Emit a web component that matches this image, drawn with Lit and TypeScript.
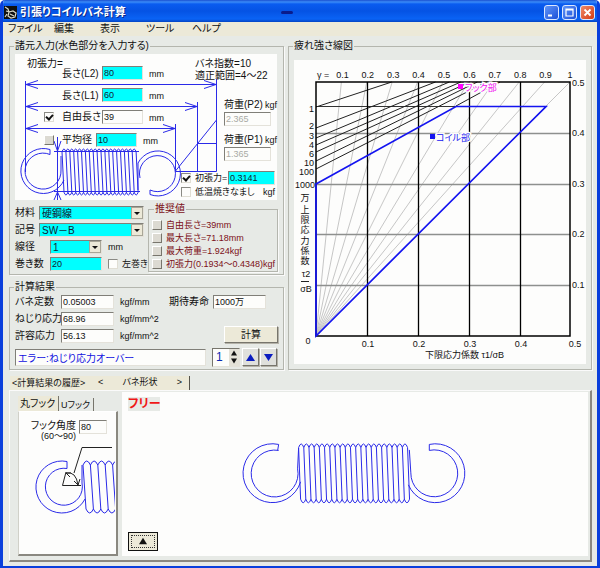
import { LitElement, html, svg, css } from "lit";
import { customElement, state } from "lit/decorators.js";

/* Outline of a close-wound coil: slanted wires joined by small round caps. */
function coil(x: number, top: number, bottom: number, turns: number, pitch: number, slant: number): string {
  const cap = Math.min(4, pitch * 0.7);
  let d = "";
  for (let i = 0; i <= turns; i++) {
    const a = x + i * pitch;
    d += `M${a} ${top + cap}L${a + slant} ${bottom - cap}`;
    if (i < turns) {
      d += `M${a} ${top + cap}Q${a + pitch / 2} ${top - cap} ${a + pitch} ${top + cap}`;
      d += `M${a + slant} ${bottom - cap}Q${a + slant + pitch / 2} ${bottom + cap} ${a + slant + pitch} ${bottom - cap}`;
    }
  }
  return d;
}

/* Thin arrowhead whose tip is at (x, y), pointing along (dx, dy). */
function arrow(x: number, y: number, dx: number, dy: number): string {
  const bx = x - dx * 12;
  const by = y - dy * 12;
  return `M${bx - dy * 4} ${by - dx * 4}L${x} ${y}L${bx + dy * 4} ${by + dx * 4}`;
}

const MATERIALS = ["硬鋼線", "ピアノ線", "ステンレス鋼線"];
const SYMBOLS = ["SW－B", "SW－C"];
const DIAMETERS = ["1", "1.2", "1.6"];

const LIFE_LINES = [
  { label: "1", y: 107, labelY: 112, slope: 0.33 },
  { label: "2", y: 128, labelY: 129, slope: 0.385 },
  { label: "3", y: 138, labelY: 139, slope: 0.42 },
  { label: "4", y: 145, labelY: 148, slope: 0.435 },
  { label: "6", y: 152, labelY: 157, slope: 0.455 },
  { label: "10", y: 161, labelY: 166, slope: 0.49 },
  { label: "100", y: 169, labelY: 175, slope: 0.51 },
];

@customElement("app-root")
export class AppRoot extends LitElement {
  @state() private page = 1;

  static styles = css`
    :host {
      display: block;
      font: 10px/12px "Liberation Sans", "Noto Sans CJK JP", sans-serif;
      font-feature-settings: "palt";
      color: #111;
    }
    * { box-sizing: border-box; }
    input, button, select { font: inherit; font-feature-settings: inherit; color: inherit; margin: 0; border-radius: 0; }
    svg { display: block; }
    .window {
      min-height: 100vh;
      display: flex;
      flex-direction: column;
      background: #e7eae6;
      border: solid #0a3fdc;
      border-width: 0 3px 3px;
      border-radius: 5px 5px 0 0;
      overflow: hidden;
    }
    .title {
      height: 22px;
      display: flex;
      align-items: center;
      padding: 2px 2px 0 1px;
      gap: 3px;
      color: #fff;
      background: linear-gradient(#1a50d0, #3b8cf8 2px, #0a5cf0 4px, #0553e4 11px, #0a63f5 19px, #0444c4);
    }
    .title h1 { font-size: 11px; line-height: 14px; margin: 0; font-weight: bold; text-shadow: 1px 1px #0a2a8c; }
    .dash { width: 12px; height: 3px; border-radius: 2px; background: #0a1c8c; margin: 0 auto 0 152px; }
    .ctl { display: block; width: 15px; height: 15px; padding: 0; border: 1px solid #dce8ff; border-radius: 3px; background: linear-gradient(135deg, #5f95f8, #1c4fd8); }
    .ctl.close { background: linear-gradient(135deg, #f08a68, #d43a14); }
    .ctl svg { width: 13px; height: 13px; }
    .menu { display: flex; background: #ece9d8; height: 14px; padding-left: 5px; }
    .menu button { border: 0; background: none; padding: 0; width: 46px; text-align: left; white-space: nowrap; line-height: 12px; }
    .content { flex: 1; display: flex; flex-direction: column; padding: 4px 5px 4px 6px; }
    .top { display: grid; grid-template-columns: 275px minmax(0, 1fr); column-gap: 4px; }
    .stack { display: flex; flex-direction: column; gap: 6px; }
    fieldset { min-width: 0; margin: 0; border: 1px solid #b4b6ae; box-shadow: 1px 1px #fafafa; padding: 2px 5px; }
    legend { padding: 0 1px; margin-left: -1px; line-height: 12px; white-space: nowrap; }
    .box {
      height: 14px;
      min-width: 0;
      padding: 0 1px 1px;
      border: 1px solid;
      border-color: #807f78 #e4e2da #e4e2da #807f78;
      background: #fdfdfb;
      font-size: 9px;
      line-height: 11px;
    }
    .cyan { background: #00ffff; color: #123; }
    .off { color: #a9aaa4; }
    .small { font-size: 9px; }
    label { white-space: nowrap; }
    input[type="checkbox"] {
      appearance: none;
      flex: none;
      width: 10px;
      height: 10px;
      border: 1px solid;
      border-color: #8a8a84 #e0ded4 #e0ded4 #8a8a84;
      background: #fdfdfb;
      display: grid;
      place-items: center;
    }
    input[type="checkbox"]:checked::before { content: ""; width: 5px; height: 3px; border: solid #111; border-width: 0 0 2px 2px; rotate: -48deg; margin-bottom: 2px; }
    input[type="checkbox"].raised, .raised { background: #dcdad2; border-color: #fff #77756c #77756c #fff; }

    .drawing { position: relative; width: 262px; height: 146px; background: #fdfdfc; }
    .note { position: absolute; display: flex; align-items: center; height: 14px; white-space: nowrap; }
    .note .box { width: 41px; }
    .check { display: flex; align-items: center; gap: 4px; }
    .check.wide { gap: 8px; }
    .n-tension { left: 12px; top: 3px; }
    .n-l2 { left: 47px; top: 12px; }
    .n-l1 { left: 47px; top: 34px; }
    .n-free { left: 29px; top: 56px; }
    .n-mean { left: 29px; top: 79px; }
    .n-l2 label, .n-l1 label { width: 40px; padding-top: 2px; }
    .n-free .check { width: 58px; }
    .n-mean .check { width: 52px; }
    .unit { margin-left: 6px; padding-top: 2px; font-size: 9px; }
    .n-index { left: 180px; top: 4px; height: 24px; display: block; line-height: 12px; }
    .n-p2 { left: 209px; top: 44px; }
    .n-p1 { left: 209px; top: 79px; }
    .note.load { display: grid; grid-template-columns: 41px auto; height: 28px; grid-auto-rows: 14px; }
    .note.load .box { width: 47px; grid-column: 1 / 3; }
    .n-init { left: 166px; top: 117px; }
    .n-init .check { width: 47px; font-size: 9px; }
    .n-init .box { width: 47px; }
    .n-heat { left: 166px; top: 131px; width: 94px; justify-content: space-between; font-size: 9px; }

    .form { display: grid; grid-template-columns: 129px minmax(0, 1fr); column-gap: 4px; margin-top: 3px; }
    .rows { display: flex; flex-direction: column; gap: 3px; padding-top: 3px; }
    .row { display: flex; align-items: center; height: 14px; white-space: nowrap; }
    .key { width: 24px; flex: none; }
    .key.long { width: 35px; }
    .pick { position: relative; flex: 1; display: flex; }
    .pick select { appearance: none; width: 100%; padding: 0 2px; line-height: 11px; font-size: 10px; }
    .pick svg { position: absolute; right: 1px; top: 1px; width: 12px; height: 12px; pointer-events: none; }
    .fixed { flex: none; width: 52px; }
    .after { margin-left: 6px; }
    .row .check { font-size: 9px; }
    .advice { color: #7c1018; padding: 3px 0 0 3px; height: 69px; }
    .advice legend { margin-left: 2px; }
    .advice .check { height: 13px; font-size: 9px; }

    .results { display: flex; justify-content: space-between; }
    .results .rows { padding: 0; }
    .results .key { width: 46px; }
    .results .box { width: 53px; }
    .side { display: flex; flex-direction: column; align-items: flex-end; justify-content: space-between; }
    .side .row { gap: 4px; padding-right: 12px; }
    .btn { background: #ece9d8; border: 1px solid; border-color: #fff #77756c #77756c #fff; box-shadow: 1px 1px #b4b2a8; padding: 0; }
    .calc { width: 54px; height: 17px; }
    .foot { display: flex; align-items: center; margin-top: 4px; height: 20px; }
    .error { flex: 1; height: 17px; color: #1010e0; font-size: 10px; margin-right: 6px; padding: 0 2px; }
    .spin { display: flex; width: 28px; height: 19px; background: #fdfdfb; border: 1px solid; border-color: #77756c #e4e2da #e4e2da #77756c; margin-right: 2px; }
    .spin input { width: 16px; border: 0; background: none; padding: 0 3px; font-size: 12px; color: #0a2ab0; }
    .spin div { display: flex; flex-direction: column; width: 10px; }
    .spin button { flex: 1; border: 0; background: #e4e2d8; padding: 0; display: grid; place-items: center; min-height: 0; }
    .btn.nav { background: #dfe0dc; }
    .nav { width: 17px; height: 18px; margin-right: 1px; display: grid; place-items: center; }
    .chartbox { padding: 8px 5px 4px; }
    .chart { width: 100%; background: #fdfdfc; }
    .chart text { font-size: 9px; fill: #111; }
    .chart .tag { paint-order: stroke; stroke: #fdfdfc; stroke-width: 3px; }
    .chart .coil { fill: #1414f0; }
    .chart .hookpart { fill: #f010f0; }

    .tabs { display: flex; height: 14px; margin-top: 6px; padding-left: 1px; }
    .tab { display: flex; justify-content: space-between; align-items: center; border: 0; background: #ece9d8; padding: 0 2px; white-space: nowrap; }
    .tab.hist { width: 83px; font-size: 9px; }
    .tab.shape { width: 97px; padding: 0 7px 2px 5px; border-right: 1px solid #55534c; font-size: 9px; }
    .panel {
      flex: 1;
      display: grid;
      grid-template-columns: 100px minmax(0, 1fr);
      column-gap: 4px;
      padding: 1px 2px 4px 8px;
      border: solid;
      border-width: 1px 2px 2px 1px;
      border-color: #fafafa #8a8880 #8a8880 #fafafa;
    }
    .sub { display: flex; flex-direction: column; padding-top: 4px; }
    .subtabs { display: flex; height: 15px; }
    .subtabs .tab { border-right: 1px solid #77756c; height: 15px; width: 41px; }
    .subtabs .tab.idle { background: #e7eae6; width: 35px; height: 13px; margin-top: 2px; font-size: 9px; }
    .hook { flex: 1; background: #fdfdfc; border: solid; border-width: 1px 2px 2px 1px; border-color: #fff #8a8880 #8a8880 #d0d0c8; padding: 8px 0 0; }
    .angle { display: flex; justify-content: flex-end; gap: 3px; padding-right: 9px; line-height: 11px; text-align: right; }
    .angle .box { width: 28px; }
    .angle span { display: block; font-size: 9px; }
    .hook svg { width: 96px; height: 84px; }
    .view { display: flex; flex-direction: column; align-items: flex-start; background: #fdfdfc; padding: 5px 6px; }
    .free { background: #e7eae6; color: #f01818; font-size: 12px; line-height: 14px; font-weight: bold; }
    .spring { flex: 1; width: 100%; min-height: 0; }
    .up { width: 30px; height: 19px; border: 1px solid #111; background: #ece9d8; padding: 2px; }
    .up span { height: 100%; border: 1px dotted #333; display: grid; place-items: center; }
  `;

  private dropIcon() {
    return html`<svg viewBox="0 0 12 12" aria-hidden="true">
      <rect x="0.5" y="0.5" width="11" height="11" fill="#ece9d8" stroke="#a8a698" />
      <path d="M3 5h6L6 8z" fill="#111" />
    </svg>`;
  }

  private pick(options: string[], label: string) {
    return html`<span class="pick">
      <select class="box cyan" aria-label=${label}>${options.map((o) => html`<option>${o}</option>`)}</select>
      ${this.dropIcon()}
    </span>`;
  }

  private triangle(up: boolean, size: number, fill: string) {
    return html`<svg width=${size} height=${size} viewBox="0 0 10 10" aria-hidden="true">
      <path d=${up ? "M5 1L10 9H0z" : "M5 9L10 1H0z"} fill=${fill} />
    </svg>`;
  }

  private renderDrawing() {
    return html`<div class="drawing">
      <svg width="262" height="146" viewBox="15 54 262 146" fill="none" stroke="#2a2ae8" aria-hidden="true">
        <path d="M25.5 81V172M25 84.500H216M25 106.500H197M25 128.500H175" />
        <path d="M216.500 79V171.500M197.500 102V171M175.500 124V171.500H216.500M197 143.500H216M175.500 171L216.500 120" />
        <path d=${arrow(26, 84.5, -1, 0) + arrow(26, 106.5, -1, 0) + arrow(26, 128.5, -1, 0)} />
        <path d=${arrow(216, 84.5, 1, 0) + arrow(197, 106.5, 1, 0) + arrow(175, 128.5, 1, 0)} />
        <path d="M57.500 137V200M54 151.500H139M54 191.500H140M54 141L57.500 151L61 141M54 200L57.500 192L61 200" />
        <path d=${coil(62, 149, 195, 19, 3.9, 2)} />
        <path d="M50 149.500A22.500 22.500 0 1 0 64 180M50 154.500A18 18 0 1 0 61 170V156M50 149.500V154.500" />
        <path d="M150 194.500A22.500 22.500 0 1 0 138 163V190M150 190A18 18 0 1 0 140 178M150 194.500V190" />
      </svg>
      <span class="note n-tension">初張力=</span>
      <div class="note n-l2"><label for="l2">長さ(L2)</label><input id="l2" class="box cyan" value="80" /><span class="unit">mm</span></div>
      <div class="note n-l1"><label for="l1">長さ(L1)</label><input id="l1" class="box cyan" value="60" /><span class="unit">mm</span></div>
      <div class="note n-free">
        <label class="check wide"><input type="checkbox" checked />自由長さ</label>
        <input class="box" value="39" aria-label="自由長さ" /><span class="unit">mm</span>
      </div>
      <div class="note n-mean">
        <label class="check wide"><input type="checkbox" class="raised" />平均径</label>
        <input class="box cyan" value="10" aria-label="平均径" /><span class="unit">mm</span>
      </div>
      <div class="note n-index">バネ指数=10<br />適正範囲=4〜22</div>
      <div class="note load n-p2"><label for="p2">荷重(P2)</label><span class="small">kgf</span><input id="p2" class="box off" value="2.365" /></div>
      <div class="note load n-p1"><label for="p1">荷重(P1)</label><span class="small">kgf</span><input id="p1" class="box off" value="1.365" /></div>
      <div class="note n-init">
        <label class="check"><input type="checkbox" checked />初張力=</label>
        <input class="box cyan" value="0.3141" aria-label="初張力" />
      </div>
      <div class="note n-heat"><label class="check"><input type="checkbox" />低温焼きなまし</label><span>kgf</span></div>
    </div>`;
  }

  private renderChart() {
    const tens = [1, 2, 3, 4];
    const gammas = [1, 2, 3, 4, 5, 6, 7, 8, 9, 10];
    return html`<svg class="chart" viewBox="294 60 292 304" role="img" aria-label="疲れ強さ線図">
      ${gammas.map((g) => svg`<path d="M316 336L${316 + g * 25.4} 82" stroke="#c0c0c0" stroke-width="0.9" fill="none" />`)}
      ${tens.map((t) => svg`<path d="M316 ${336.5 - Math.round(t * 50.8)}H570" stroke="#8e908e" stroke-width="1.5" />`)}
      <path d="M316 106.500H456" stroke="#333" />
      ${LIFE_LINES.map((l) => svg`<path d="M316 ${l.y}L${316 + (l.y - 82) / l.slope} 82" stroke="#222" />`)}
      <path d="M456 106L500 82" stroke="#222" />
      ${tens.map((t) => svg`<path d="M${316.5 + Math.round(t * 51)} 82V336" stroke="#000" stroke-width="1.3" />`)}
      <path d="M316 82H570V336H316z" fill="none" stroke="#000" stroke-width="1.5" />
      <path d="M316 336V184L456 106.500H546z" fill="none" stroke="#1414f0" stroke-width="1.700" />
      <text x="317" y="78">γ =</text>
      ${gammas.map((g) => svg`<text x=${g === 10 ? 570 : 317 + g * 25.4} y="78" text-anchor="middle">${g === 10 ? "1" : (g / 10).toFixed(1)}</text>`)}
      ${LIFE_LINES.map((l) => svg`<text x="314" y=${l.labelY} text-anchor="end">${l.label}</text>`)}
      <text x="315" y="188" text-anchor="end">1000</text>
      ${[..."万上限応力係数"].map((c, i) => svg`<text x="305" y=${[201, 213, 223, 233, 244, 254, 264][i]} text-anchor="middle">${c}</text>`)}
      <text x="306" y="277" text-anchor="middle">τ2</text>
      <path d="M301 281.500H309" stroke="#222" />
      <text x="306" y="292" text-anchor="middle">σB</text>
      <text x="308" y="344" text-anchor="middle">0</text>
      ${[1, 2, 3, 4, 5].map((t) => svg`
        <text x=${t === 5 ? 575 : 317 + t * 51} y="347" text-anchor="middle">0.${t}</text>
        <text x="572" y=${339 - t * 50.8 + (t === 5 ? 1 : 0)}>0.${t}</text>`)}
      <text x="425" y="358">下限応力係数 τ1/σB</text>
      <rect x="430" y="134" width="5" height="5" fill="#1414f0" />
      <text class="tag coil" x="436" y="141">コイル部</text>
      <rect x="458" y="84" width="5" height="5" fill="#f0f" />
      <text class="tag hookpart" x="465" y="91">フック部</text>
    </svg>`;
  }

  private result(id: string, name: string, value: string, unit: string) {
    return html`<div class="row">
      <label class="key" for=${id}>${name}</label>
      <input id=${id} class="box" .value=${value} />
      <span class="small after">${unit}</span>
    </div>`;
  }

  render() {
    return html`<div class="window">
      <header class="title">
        <svg width="13" height="13" viewBox="0 0 13 13" aria-hidden="true">
          <rect width="13" height="13" fill="#101010" />
          <path d="M1 1l3 2 1 3M2 5l4 1M5 6l4-1 3 2-1 4-4 1-3-2zM6 8l4 2M1 11l2-3" fill="none" stroke="#d8d8c8" stroke-width="1.200" />
        </svg>
        <h1>引張りコイルバネ計算</h1>
        <span class="dash"></span>
        <button class="ctl" aria-label="最小化"><svg viewBox="0 0 13 13"><path d="M3 9.500h4" stroke="#fff" stroke-width="2" /></svg></button>
        <button class="ctl" aria-label="最大化"><svg viewBox="0 0 13 13"><path d="M3 3h7v7H3zM3 4h7" fill="none" stroke="#fff" stroke-width="1.200" /></svg></button>
        <button class="ctl close" aria-label="閉じる"><svg viewBox="0 0 13 13"><path d="M3.500 3.500l6 6m0-6l-6 6" stroke="#fff" stroke-width="1.800" /></svg></button>
      </header>
      <nav class="menu">
        ${["ファイル", "編集", "表示", "ツール", "ヘルプ"].map((m) => html`<button>${m}</button>`)}
      </nav>
      <main class="content">
        <div class="top">
          <div class="stack">
            <fieldset>
              <legend>諸元入力(水色部分を入力する)</legend>
              ${this.renderDrawing()}
              <div class="form">
                <div class="rows">
                  <div class="row"><span class="key">材料</span>${this.pick(MATERIALS, "材料")}</div>
                  <div class="row"><span class="key">記号</span>${this.pick(SYMBOLS, "記号")}</div>
                  <div class="row"><span class="key long">線径</span><span class="fixed">${this.pick(DIAMETERS, "線径")}</span><span class="small after">mm</span></div>
                  <div class="row">
                    <label class="key long" for="turns">巻き数</label><input id="turns" class="box cyan fixed" value="20" />
                    <label class="check after"><input type="checkbox" />左巻き</label>
                  </div>
                </div>
                <fieldset class="advice">
                  <legend>推奨値</legend>
                  ${["自由長さ=39mm", "最大長さ=71.18mm", "最大荷重=1.924kgf", "初張力(0.1934〜0.4348)kgf"].map(
                    (t) => html`<label class="check"><input type="checkbox" class="raised" />${t}</label>`,
                  )}
                </fieldset>
              </div>
            </fieldset>
            <fieldset>
              <legend>計算結果</legend>
              <div class="results">
                <div class="rows">
                  ${this.result("rate", "バネ定数", "0.05003", "kgf/mm")}
                  ${this.result("twist", "ねじり応力", "68.96", "kgf/mm^2")}
                  ${this.result("allow", "許容応力", "56.13", "kgf/mm^2")}
                </div>
                <div class="side">
                  <div class="row"><label for="life">期待寿命</label><input id="life" class="box" value="1000万" /></div>
                  <button class="btn calc">計算</button>
                </div>
              </div>
              <div class="foot">
                <input class="box error" readonly value="エラー:ねじり応力オーバー" aria-label="メッセージ" />
                <div class="spin">
                  <input .value=${String(this.page)} aria-label="番号" />
                  <div>
                    <button aria-label="増やす" @click=${() => this.page++}>${this.triangle(true, 6, "#111")}</button>
                    <button aria-label="減らす" @click=${() => this.page--}>${this.triangle(false, 6, "#111")}</button>
                  </div>
                </div>
                <button class="btn nav" aria-label="上へ">${this.triangle(true, 9, "#0a1cc0")}</button>
                <button class="btn nav" aria-label="下へ">${this.triangle(false, 9, "#0a1cc0")}</button>
              </div>
            </fieldset>
          </div>
          <fieldset class="chartbox">
            <legend>疲れ強さ線図</legend>
            ${this.renderChart()}
          </fieldset>
        </div>
        <div class="tabs">
          <button class="tab hist">&lt;計算結果の履歴&gt;</button>
          <button class="tab shape"><span>&lt;</span><span>バネ形状</span><span>&gt;</span></button>
        </div>
        <section class="panel">
          <div class="sub">
            <div class="subtabs"><button class="tab">丸フック</button><button class="tab idle">Uフック</button></div>
            <div class="hook">
              <div class="angle">
                <label for="angle">フック角度<span>(60〜90)</span></label>
                <input id="angle" class="box" value="80" />
              </div>
              <svg viewBox="19 441 96 84" fill="none" stroke="#2a2ae8" aria-hidden="true">
                <path d=${coil(83, 460, 512, 6, 7.4, 3)} />
                <path d="M67 460.500A26 26 0 1 0 85 498M67 467.500A18.500 18.500 0 1 0 82 482V464M67 460.500V467.500" />
                <path d="M112 446.500H82L74 472M62.500 484.500L66 471M62.500 484.500H81M66 472Q76 470 78 484M66 472l5 0M66 472l4 4M78 484l-4-4M78 484l2-6" stroke="#222" />
              </svg>
            </div>
          </div>
          <div class="view">
            <span class="free">フリー</span>
            <svg class="spring" viewBox="128 410 455 121" fill="none" stroke="#2a2ae8" preserveAspectRatio="xMinYMid meet" role="img" aria-label="バネ形状">
              <path d=${coil(299, 443, 502, 21, 5.2, 2)} />
              <path d="M279 443.500A29.500 29.500 0 1 0 301 481M279 449.500A23.500 23.500 0 1 0 298 468L299 447M279 443.500L278 449.500" />
              <path d="M430 443.500A29.500 29.500 0 1 1 409 484M430 449.500A23.500 23.500 0 1 1 411.500 472L410 449M430 443.500V449.500" />
            </svg>
            <button class="up" aria-label="上へ"><span>${this.triangle(true, 8, "#111")}</span></button>
          </div>
        </section>
      </main>
    </div>`;
  }
}
